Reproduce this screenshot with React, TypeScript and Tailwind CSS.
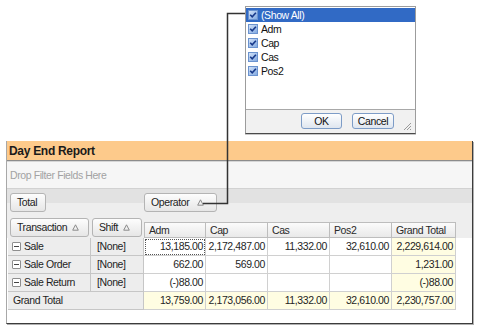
import React from "react";

const Tri = () => (
  <svg width="7" height="7" viewBox="0 0 7 7" className="shrink-0">
    <path d="M3.5 0.8 L6.3 6.2 H0.7 Z" fill="none" stroke="#8a8a8a" strokeWidth="1" />
  </svg>
);

const HBtn = ({ label, w, tri, gap }: { label: string; w: string; tri?: boolean; gap?: string }) => (
  <div
    className={`h-[19px] ${w} shrink-0 rounded-[3px] border border-[#b4b4b4] bg-[linear-gradient(to_bottom,#fdfdfd,#e6e6e6)] flex items-center pl-[6px] ${gap ?? "gap-[5px]"} text-[#222]`}
  >
    <span>{label}</span>
    {tri && <Tri />}
  </div>
);

const Check = () => (
  <svg width="10" height="10" viewBox="0 0 10 10" className="shrink-0">
    <defs>
      <linearGradient id="cg" x1="0" y1="0" x2="1" y2="1">
        <stop offset="0" stopColor="#d6e5f9" />
        <stop offset="1" stopColor="#7fa7e0" />
      </linearGradient>
    </defs>
    <rect x="0.5" y="0.5" width="9" height="9" fill="url(#cg)" stroke="#6b93cf" />
    <path d="M2.2 4.8 L4.2 6.9 L7.9 2.8" fill="none" stroke="#17398a" strokeWidth="1.6" />
  </svg>
);

const Minus = () => (
  <div className="w-[9px] h-[9px] shrink-0 rounded-[1px] border border-[#8e8e8e] bg-white flex items-center justify-center">
    <div className="w-[5px] h-[1px] bg-[#444]" />
  </div>
);

const colW = ["w-[62px]", "w-[62px]", "w-[62px]", "w-[62px]", "w-[64px]"];
const cols = ["Adm", "Cap", "Cas", "Pos2", "Grand Total"];

const rows = [
  { label: "Sale", vals: ["13,185.00", "2,172,487.00", "11,332.00", "32,610.00", "2,229,614.00"] },
  { label: "Sale Order", vals: ["662.00", "569.00", "", "", "1,231.00"] },
  { label: "Sale Return", vals: ["(-)88.00", "", "", "", "(-)88.00"] },
];
const gt = ["13,759.00", "2,173,056.00", "11,332.00", "32,610.00", "2,230,757.00"];

const items = ["(Show All)", "Adm", "Cap", "Cas", "Pos2"];

export default function App() {
  return (
    <div className="relative w-[481px] h-[331px] bg-white overflow-hidden font-['Liberation_Sans',Arial,sans-serif] text-[10.5px] tracking-[-0.4px] leading-none text-[#1e1e1e]">
      <div className="pt-[141px] pl-[6px]">
        {/* Pivot panel */}
        <div className="w-[467px] h-[183px] flex flex-col bg-white border-l border-l-[#a8a8a8] border-r border-r-[#3c3c3c] border-b border-b-[#3c3c3c] shadow-[1px_1px_0_#b0b0b0]">
          <div className="h-[20px] shrink-0 bg-[#fdca8b] border-b border-b-[#8c8c8c] pl-[2px] flex items-center">
            <span className="text-[12px] tracking-[-0.3px] font-bold text-[#1a1a1a]">Day End Report</span>
          </div>
          <div className="h-[27px] shrink-0 bg-[#f6f6f6] border-t border-t-[#d6d6d6] pl-[3px] flex items-center text-[#a2a2a2]">
            Drop Filter Fields Here
          </div>
          {/* Data header row */}
          <div className="h-[27px] shrink-0 border-t border-t-[#d2d2d2] bg-[linear-gradient(to_bottom,#e2e2e2_14px,#eeeeee_14px)] flex items-start pt-[4px]">
            <div className="w-[137px] shrink-0 pl-[3px]">
              <HBtn label="Total" w="w-[36px]" />
            </div>
            <HBtn label="Operator" w="w-[73px]" tri gap="gap-[8px]" />
          </div>
          {/* Row / column header row */}
          <div className="h-[23px] shrink-0 bg-[#eeeeee] flex">
            <div className="w-[137px] shrink-0 pl-[3px] pt-[3px] flex gap-[3px] items-start">
              <HBtn label="Transaction" w="w-[79px]" tri />
              <HBtn label="Shift" w="w-[50px]" tri />
            </div>
            <div className="flex items-end">
              {cols.map((c, i) => (
                <div
                  key={c}
                  className={`${colW[i]} h-[16px] border-t border-r border-b border-[#bdbdbd] ${i === 0 ? "border-l" : ""} bg-[linear-gradient(to_bottom,#fbfbfb,#e9e9e9)] flex items-center pl-[4px] text-[#2a2a2a]`}
                >
                  {c}
                </div>
              ))}
            </div>
          </div>
          {/* Data rows */}
          <div className="flex flex-col pl-[1px]">
            {rows.map((r) => (
              <div key={r.label} className="flex h-[18px]">
                <div className="w-[83px] shrink-0 bg-[#ededed] border-r border-b border-[#c6c6c6] flex items-center pl-[4px] gap-[3px]">
                  <Minus />
                  <span>{r.label}</span>
                </div>
                <div className="w-[53px] shrink-0 bg-[#ededed] border-r border-b border-[#c6c6c6] flex items-center pl-[6px]">
                  [None]
                </div>
                {r.vals.map((v, i) => (
                  <div
                    key={i}
                    className={`${colW[i]} shrink-0 border-r border-b border-[#d0d0d0] flex items-center justify-end pr-[2px] ${i === 4 ? "bg-[#fffde2]" : "bg-white"} ${r.label === "Sale" && i === 0 ? "outline-1 outline-dotted outline-[#555] -outline-offset-2" : ""}`}
                  >
                    {v}
                  </div>
                ))}
              </div>
            ))}
            <div className="flex h-[18px]">
              <div className="w-[136px] shrink-0 bg-[#ededed] border-r border-b border-[#c6c6c6] flex items-center pl-[5px]">
                Grand Total
              </div>
              {gt.map((v, i) => (
                <div
                  key={i}
                  className={`${colW[i]} shrink-0 border-r border-b border-[#d0d0d0] bg-[#fffde2] flex items-center justify-end pr-[2px]`}
                >
                  {v}
                </div>
              ))}
            </div>
          </div>
        </div>
      </div>

      {/* Filter popup */}
      <div className="absolute left-[245px] top-[6px] w-[171px] h-[128px] flex flex-col border border-[#9c9c9c] border-b-[#4a4a4a] bg-white shadow-[0_1px_0_#c8c8c8]">
        <div className="flex-1 flex flex-col pt-[1px] border-b border-b-[#a8a8a8]">
          {items.map((it, i) => (
            <div
              key={it}
              className={`h-[14px] flex items-center gap-[3px] pl-[2px] ${i === 0 ? "bg-[#316ac5] text-white" : "text-[#111]"}`}
            >
              <Check />
              <span>{it}</span>
            </div>
          ))}
        </div>
        <div className="h-[23px] shrink-0 bg-[#f1f1f1] flex justify-end items-start pt-[3px]">
          <div className="w-[41px] h-[16px] rounded-[3px] border border-[#7d9cc7] bg-[linear-gradient(to_bottom,#ffffff,#dfe6ef)] flex items-center justify-center text-[#111]">
            OK
          </div>
          <div className="ml-[10px] w-[42px] h-[16px] rounded-[3px] border border-[#7d9cc7] bg-[linear-gradient(to_bottom,#ffffff,#dfe6ef)] flex items-center justify-center text-[#111]">
            Cancel
          </div>
          <svg width="10" height="10" viewBox="0 0 10 10" className="ml-[8px] mr-[3px] self-end mb-[2px]">
            <path d="M9 2 L2 9 M9 5 L5 9 M9 8 L8 9" stroke="#9a9a9a" strokeWidth="1" />
          </svg>
        </div>
      </div>

      {/* Connector line */}
      <svg className="absolute left-0 top-0 pointer-events-none" width="481" height="331">
        <path d="M203 203.5 H227.5 V13.5 H245" fill="none" stroke="#333" strokeWidth="1.5" />
      </svg>
    </div>
  );
}
